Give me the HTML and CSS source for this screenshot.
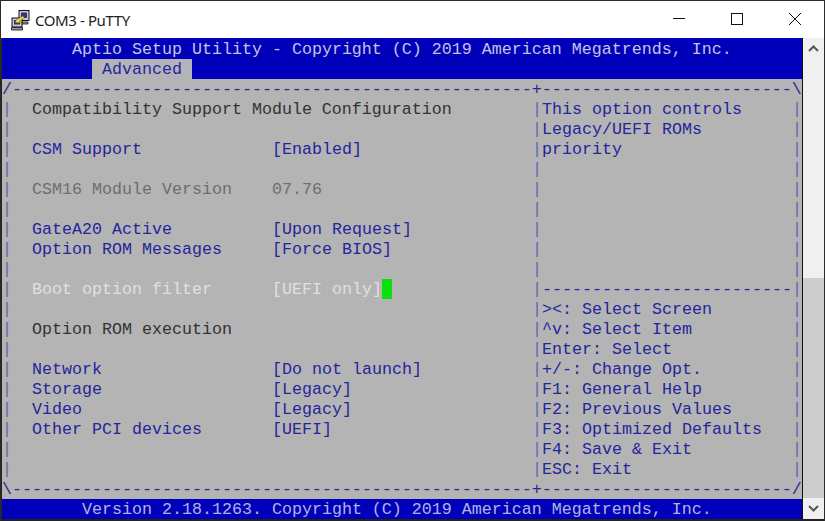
FILE: index.html
```html
<!DOCTYPE html>
<html lang="en">
<head>
<meta charset="utf-8">
<title>COM3 - PuTTY</title>
<link rel="stylesheet" href="styles.css">
</head>
<body>
<div class="window">
  <header class="titlebar">
    <svg class="appicon" width="22" height="22" viewBox="0 0 22 22">
      <rect x="9" y="1.5" width="10" height="10" fill="#c8c8d8" stroke="#111"/>
      <rect x="11" y="3.5" width="6" height="5.5" fill="#33337a"/>
      <path d="M9 13h9v2H9z" fill="#999" stroke="#111" stroke-width=".8"/>
      <rect x="2" y="9" width="10" height="9" fill="#c8c8d8" stroke="#111"/>
      <rect x="4" y="11" width="6" height="4.500" fill="#33337a"/>
      <path d="M1.500 18.500h11v2.500h-11z" fill="#999" stroke="#111" stroke-width=".8"/>
      <path d="M6 11l7-4 1.500 2-5 3 1 2-5-.5z" fill="#f2e23c" stroke="#6b6410" stroke-width=".6"/>
    </svg>
    <span class="wintitle">COM3 - PuTTY</span>
    <div class="controls">
      <svg class="ctl" width="58" height="37" viewBox="0 0 58 37"><path d="M23 17.500h12" stroke="#111" fill="none"/></svg>
      <svg class="ctl" width="58" height="37" viewBox="0 0 58 37"><rect x="23.500" y="12.500" width="11" height="11" stroke="#111" fill="none"/></svg>
      <svg class="ctl" width="58" height="37" viewBox="0 0 58 37"><path d="M23 12l12 12M35 12L23 24" stroke="#111" fill="none"/></svg>
    </div>
  </header>
  <div class="client">
    <main class="term">
      <div class="head">
        <div class="line title">Aptio Setup Utility - Copyright (C) 2019 American Megatrends, Inc.</div>
        <div class="line tabs"><span class="tab">Advanced</span></div>
      </div>
      <div class="body">
        <div class="rule"><span>/----------------------------------------------------</span><span>+-------------------------\</span></div>
        <div class="row"><i>|</i><div class="left dark">Compatibility Support Module Configuration</div><i>|</i><div class="right">This option controls</div><i>|</i></div>
        <div class="row"><i>|</i><div class="left"></div><i>|</i><div class="right">Legacy/UEFI ROMs</div><i>|</i></div>
        <div class="row"><i>|</i><div class="left"><span class="label">CSM Support</span><span>[Enabled]</span></div><i>|</i><div class="right">priority</div><i>|</i></div>
        <div class="row"><i>|</i><div class="left"></div><i>|</i><div class="right"></div><i>|</i></div>
        <div class="row"><i>|</i><div class="left muted"><span class="label">CSM16 Module Version</span><span>07.76</span></div><i>|</i><div class="right"></div><i>|</i></div>
        <div class="row"><i>|</i><div class="left"></div><i>|</i><div class="right"></div><i>|</i></div>
        <div class="row"><i>|</i><div class="left"><span class="label">GateA20 Active</span><span>[Upon Request]</span></div><i>|</i><div class="right"></div><i>|</i></div>
        <div class="row"><i>|</i><div class="left"><span class="label">Option ROM Messages</span><span>[Force BIOS]</span></div><i>|</i><div class="right"></div><i>|</i></div>
        <div class="row"><i>|</i><div class="left"></div><i>|</i><div class="right"></div><i>|</i></div>
        <div class="row"><i>|</i><div class="left light"><span class="label">Boot option filter</span><span>[UEFI only]</span><span class="cursor"></span></div><i>|</i><div class="right">-------------------------</div><i>|</i></div>
        <div class="row"><i>|</i><div class="left"></div><i>|</i><div class="right">&gt;&lt;: Select Screen</div><i>|</i></div>
        <div class="row"><i>|</i><div class="left dark">Option ROM execution</div><i>|</i><div class="right">^v: Select Item</div><i>|</i></div>
        <div class="row"><i>|</i><div class="left"></div><i>|</i><div class="right">Enter: Select</div><i>|</i></div>
        <div class="row"><i>|</i><div class="left"><span class="label">Network</span><span>[Do not launch]</span></div><i>|</i><div class="right">+/-: Change Opt.</div><i>|</i></div>
        <div class="row"><i>|</i><div class="left"><span class="label">Storage</span><span>[Legacy]</span></div><i>|</i><div class="right">F1: General Help</div><i>|</i></div>
        <div class="row"><i>|</i><div class="left"><span class="label">Video</span><span>[Legacy]</span></div><i>|</i><div class="right">F2: Previous Values</div><i>|</i></div>
        <div class="row"><i>|</i><div class="left"><span class="label">Other PCI devices</span><span>[UEFI]</span></div><i>|</i><div class="right">F3: Optimized Defaults</div><i>|</i></div>
        <div class="row"><i>|</i><div class="left"></div><i>|</i><div class="right">F4: Save &amp; Exit</div><i>|</i></div>
        <div class="row"><i>|</i><div class="left"></div><i>|</i><div class="right">ESC: Exit</div><i>|</i></div>
        <div class="rule"><span>\----------------------------------------------------</span><span>+-------------------------/</span></div>
      </div>
      <div class="line footer">Version 2.18.1263. Copyright (C) 2019 American Megatrends, Inc.</div>
    </main>
    <aside class="scrollbar">
      <svg class="arrow" width="21" height="21" viewBox="0 0 21 21"><path d="M6 13l4.500-4.500L15 13" stroke="#555" stroke-width="2" fill="none"/></svg>
      <div class="track"></div>
      <div class="thumb"></div>
      <svg class="arrow" width="21" height="21" viewBox="0 0 21 21"><path d="M6 8l4.500 4.500L15 8" stroke="#555" stroke-width="2" fill="none"/></svg>
    </aside>
  </div>
</div>
</body>
</html>
```
FILE: styles.css
```css
html, body { margin: 0; padding: 0; background: #fff; }
body { width: 825px; height: 521px; overflow: hidden; }
.window { width: 825px; height: 521px; box-sizing: border-box; border: 1px solid #2b2b2b; border-bottom: 0; background: #fff; display: flex; flex-direction: column; }
.titlebar { height: 37px; flex: none; display: flex; align-items: center; background: #fff; }
.appicon { margin-left: 9px; flex: none; }
.wintitle { margin-left: 3px; font: 15px "Noto Sans", sans-serif; color: #222; letter-spacing: -.4px; }
.controls { margin-left: auto; display: flex; }
.ctl { display: block; }
.client { height: 483px; flex: none; display: flex; padding-left: 1px; padding-bottom: 2px; box-sizing: border-box; background: #222; }
.term { width: 800px; flex: none; border-right: 1px solid #111; font: 16.670px/22px "Liberation Mono", monospace; color: #25259c; white-space: nowrap; }
.line { height: 20px; }
.head { background: #0000bb; padding-top: 1px; }
.title { padding-left: 70px; color: #c4c4e4; }
.tabs { padding-left: 90px; }
.tab { display: block; width: 100px; height: 20px; margin-top: 0; padding-left: 10px; box-sizing: border-box; background: #b4b4b8; color: #27279c; }
.body { background: #b4b4b4; }
.rule { height: 20px; display: flex; }
.row { height: 20px; display: flex; }
.row i { width: 10px; flex: none; font-style: normal; color: #6767b4; }
.left { width: 520px; flex: none; padding-left: 20px; box-sizing: border-box; display: flex; }
.right { width: 250px; flex: none; }
.label { width: 240px; flex: none; }
.dark { color: #333; }
.muted { color: #6e6e6e; }
.light { color: #e0e0e0; }
.cursor { width: 10px; height: 20px; background: #0be00f; }
.footer { background: #0000bb; color: #b4b4e0; padding-left: 80px; }
.scrollbar { flex: 1; display: flex; flex-direction: column; background: #f0f0f0; }
.arrow { display: block; flex: none; }
.track { height: 219px; flex: none; }
.thumb { height: 220px; flex: none; background: #cdcdcd; }
```
